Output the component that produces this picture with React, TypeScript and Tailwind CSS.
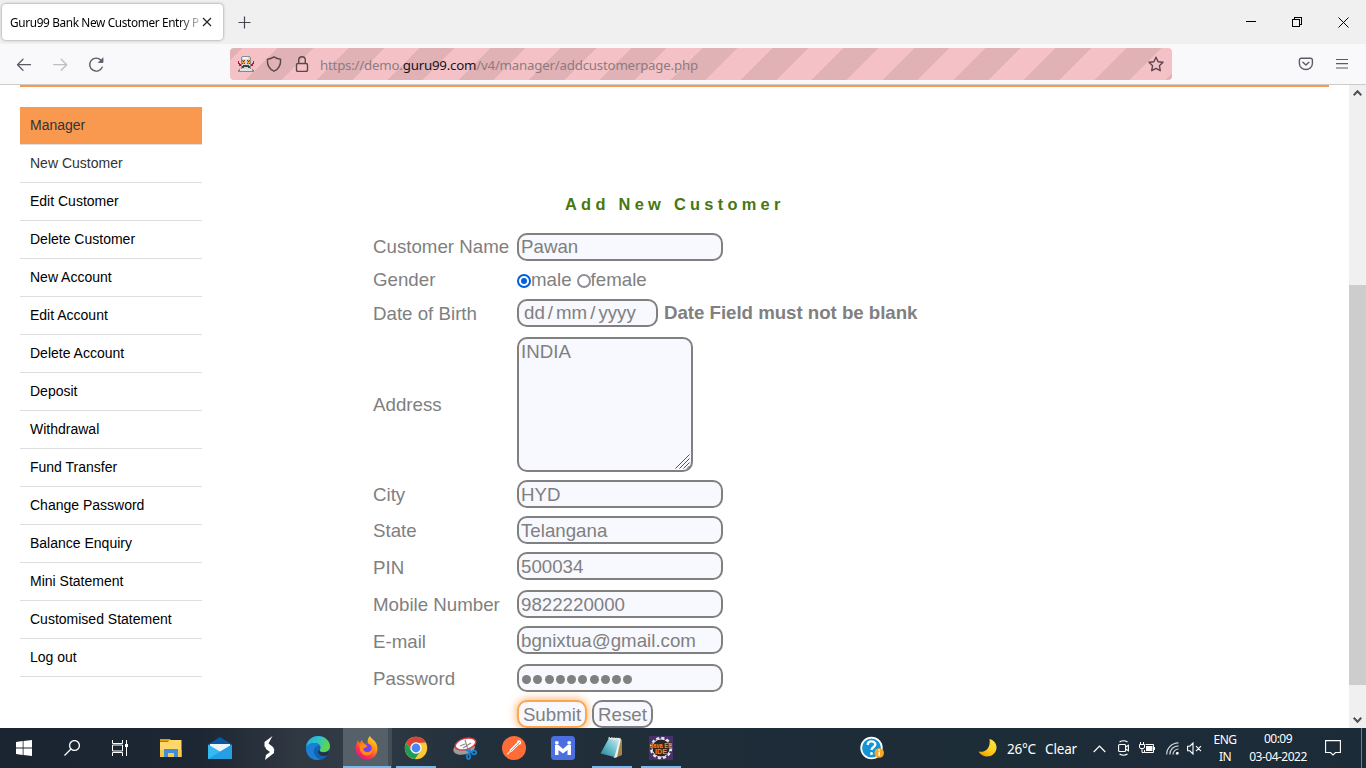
import React from "react";

const menu = [
  "New Customer", "Edit Customer", "Delete Customer", "New Account", "Edit Account", "Delete Account", "Deposit",
  "Withdrawal", "Fund Transfer", "Change Password", "Balance Enquiry", "Mini Statement", "Customised Statement", "Log out",
];

function TabBar() {
  return (
    <div className="flex h-11 shrink-0 items-start bg-[#f0f0f0]">
      <div className="ml-0.5 mt-1 flex h-9 w-[221px] items-center rounded bg-white pl-2 shadow-[0_0_3px_rgba(0,0,0,0.45)]">
        <div className="w-[190px] whitespace-nowrap bg-[linear-gradient(90deg,#000_168px,transparent_196px)] bg-clip-text pt-0.5 text-[11.8px] tracking-[-0.35px] text-transparent">
          Guru99 Bank New Customer Entry P
        </div>
        <svg className="ml-0.5 size-[10px]" viewBox="0 0 10 10" fill="none" stroke="#222" strokeWidth="1.2"><path d="M1 1l8 8M9 1l-8 8" /></svg>
      </div>
      <svg className="ml-[15px] mt-4 size-[13px]" viewBox="0 0 13 13" stroke="#45454f" strokeWidth="1.2"><path d="M6.5 .5v12M.5 6.5h12" /></svg>
      <div className="flex-1" />
      <svg className="mr-[35px] mt-4 h-[11px] w-[11px]" viewBox="0 0 11 11" stroke="#000" shapeRendering="crispEdges"><path d="M0 5.500h10" /></svg>
      <svg className="mr-[35px] mt-[17px] size-[11px]" viewBox="0 0 11 11" fill="none" stroke="#000" shapeRendering="crispEdges"><path d="M.5 2.500h7v7h-7zM2.500 2.500v-2h7v7h-2" /></svg>
      <svg className="mr-[17px] mt-[17px] size-[11px]" viewBox="0 0 11 11" stroke="#000"><path d="M.5 .5l10 10M10.500 .5l-10 10" /></svg>
    </div>
  );
}

function Robot() {
  return (
    <svg className="h-4 w-[18px]" viewBox="0 0 18 16" shapeRendering="crispEdges">
      <path fill="#8d8d8d" d="M5 0h8v1h1v12H4V1h1z" />
      <path fill="#d5d8da" d="M5 1h8v12H5z" />
      <path fill="#f4f6f7" d="M6 1h5v2H6z" />
      <path fill="#5a5a5a" d="M5 4h3v4H5zM10 4h3v4h-3z" />
      <path fill="#f39a30" d="M5 5h3v2H5zM6 4h1v4H6zM10 5h3v2h-3zM11 4h1v4h-1z" />
      <path fill="#7a2c10" d="M6 5h1v1H6zM11 5h1v1h-1z" />
      <path fill="#444" d="M6 9h6v1h1v2h-2v-1H7v1H5v-2h1z" />
      <path fill="#c0142c" d="M1 5h1v3H1zM2 7h1v3H2zM3 8h1v2H3zM16 5h1v3h-1zM15 7h1v3h-1zM14 8h1v2h-1z" />
      <path fill="#888" d="M2 13h14v1h1v2H1v-2h1z" />
      <path fill="#dfe2e3" d="M3 13h12v2H3z" />
    </svg>
  );
}

function NavBar() {
  return (
    <div className="flex h-[41px] shrink-0 items-start border-b border-[#ccc] bg-[#f9f9fb]">
      <svg className="ml-4 mt-3 h-4 w-4" viewBox="0 0 16 16" fill="none" stroke="#5b5b66" strokeWidth="1.3" strokeLinecap="round" strokeLinejoin="round"><path d="M14.500 8.700H1.500M7 3.200L1.500 8.700l5.500 5.500" /></svg>
      <svg className="ml-[21px] mt-3 h-4 w-4" viewBox="0 0 16 16" fill="none" stroke="#bdbdc2" strokeWidth="1.3" strokeLinecap="round" strokeLinejoin="round"><path d="M.7 8.700h13M8.200 3.200l5.500 5.500-5.500 5.500" /></svg>
      <svg className="ml-[19px] mt-3 h-[17px] w-[17px]" viewBox="0 0 17 17" fill="none" stroke="#5b5b66" strokeWidth="1.4" strokeLinecap="round"><path d="M14.200 11.200A6.500 6.500 0 1 1 12.800 4" /><path d="M15 2.200v4.300h-4.300z" fill="#5b5b66" strokeWidth=".8" /></svg>
      <div className="ml-[125px] mt-1 flex h-8 w-[942px] items-center rounded bg-[repeating-linear-gradient(135deg,#e0b2b6_0,#e0b2b6_8.9px,#f4c2c6_8.9px,#f4c2c6_33.9px,#e0b2b6_33.9px,#e0b2b6_50px)] pl-[7px]">
        <Robot />
        <svg className="ml-[11px] h-4 w-4" viewBox="0 0 16 16" fill="none" stroke="#5a474e" strokeWidth="1.4" strokeLinejoin="round"><path d="M8 .9c2.100 1.500 4.200 2.200 6.600 2.300.3 5.500-1.500 9.800-6.600 12C2.900 13 1.100 8.700 1.400 3.200 3.800 3.100 5.900 2.400 8 .9z" /></svg>
        <svg className="ml-3 h-4 w-4" viewBox="0 0 16 16" fill="none" stroke="#5a474e" strokeWidth="1.4"><rect x="2.500" y="7.500" width="11" height="8" rx="1.500" /><path d="M4.700 7.500V4a3.300 3.300 0 0 1 6.600 0v3.500" /></svg>
        <div className="ml-[10px] mt-1 w-[828px] whitespace-nowrap text-[13.3px] tracking-[-0.22px] text-[#8f7a80]">
          https://demo.<span className="text-[#15141a]">guru99.com</span>/v4/manager/addcustomerpage.php
        </div>
        <svg className="h-4 w-4" viewBox="0 0 16 16" fill="none" stroke="#5a474e" strokeWidth="1.4" strokeLinejoin="round"><path d="M8 1.200l2.100 4.500 4.900.6-3.600 3.400.9 5-4.300-2.400-4.300 2.400.9-5L1 6.300l4.900-.6z" /></svg>
      </div>
      <svg className="ml-[126px] mt-[13px] h-[15px] w-4" viewBox="0 0 16 15" fill="none" stroke="#5b5b66" strokeWidth="1.4" strokeLinecap="round" strokeLinejoin="round"><path d="M3.400 1.200h9c1.200 0 2 .8 2 2v3.300a6.500 6 0 0 1-13 0V3.200c0-1.200.8-2 2-2zM4.900 5.200l3 2.900 3-2.900" /></svg>
      <svg className="ml-[22px] mt-3.5 h-[13px] w-[13px]" viewBox="0 0 13 13" stroke="#5b5b66" strokeWidth="1.2"><path d="M0 1.500h12M0 5.700h12M0 10h12" /></svg>
    </div>
  );
}

function Row({ label, gap, h = "h-7", nudge = "", children }: { label: string; gap: string; h?: string; nudge?: string; children: React.ReactNode }) {
  return (
    <div className={`flex items-center ${h} ${gap}`}>
      <div className={`w-36 leading-[22px] ${nudge}`}>{label}</div>
      {children}
    </div>
  );
}

function Field({ first, children }: { first?: boolean; children: React.ReactNode }) {
  return <div className={`flex h-7 w-[206px] items-center rounded-[10px] border-2 border-[#808080] bg-[#f8f8ff] pl-0.5 leading-[22px] ${first ? "" : "pt-0.5"}`}>{children}</div>;
}

function Page() {
  return (
    <div className="flex h-[643px] shrink-0 overflow-hidden bg-white font-['Liberation_Sans',Arial,sans-serif]">
      <div className="ml-5 w-[1309px]">
        <div className="h-0.5 bg-[#f8984f]" />
        <div className="flex">
          <div className="mt-5 w-[182px] text-[14px] leading-[37px]">
            <div className="h-[38px] border-b border-[#dedede] bg-[#f8994f] bg-clip-padding pl-2.5 text-[#333]">Manager</div>
            {menu.map((m, i) => (
              <div key={m} className={`h-[38px] border-b border-[#dedede] pl-2.5 ${i === 0 ? "text-[#333]" : "text-black"}`}>{m}</div>
            ))}
          </div>
          <div className="ml-[171px] mt-[106px] w-[600px] whitespace-nowrap text-[18.72px] text-[#808080]">
            <div className="ml-48 h-[23px] text-[16.4px] font-bold leading-[22px] tracking-[4.28px] text-[#47780f]">Add New Customer</div>
            <Row label="Customer Name" gap="mt-[17px]"><Field first>Pawan</Field></Row>
            <Row label="Gender" gap="mt-[5px]">
              <span className="mt-0.5 flex size-3.5 items-center justify-center rounded-full border-2 border-[#0060df] bg-white"><span className="size-1.5 rounded-full bg-[#0060df]" /></span>
              <span>male</span>
              <span className="ml-[5px] mt-0.5 size-3.5 rounded-full border-2 border-[#8f8f9d] bg-white" />
              <span>female</span>
            </Row>
            <Row label="Date of Birth" gap="mt-[5px]" nudge="pt-0.5">
              <div className="flex h-7 w-[141px] items-center rounded-[10px] border-2 border-[#808080] bg-[#f8f8ff] pl-[5px]">
                <span>dd</span><span className="mx-[3px]">/</span><span>mm</span><span className="mx-[3px]">/</span><span>yyyy</span>
              </div>
              <span className="ml-1.5 font-bold tracking-[-0.04px]">Date Field must not be blank</span>
            </Row>
            <Row label="Address" gap="mt-[10px]" h="h-[135px]">
              <div className="flex h-[135px] w-44 flex-col justify-between rounded-[10px] border-2 border-[#808080] bg-[#f8f8ff] pl-0.5">
                <div className="leading-[25px]">INDIA</div>
                <svg className="mb-px mr-px size-[15px] self-end" viewBox="0 0 15 15" stroke="#555" strokeWidth="1"><path d="M.5 14.500l14-14M4.500 14.500l10-10M8.500 14.500l6-6M12 14.500l2.500-2.500" /></svg>
              </div>
            </Row>
            <Row label="City" gap="mt-2" nudge="pt-0.5"><Field>HYD</Field></Row>
            <Row label="State" gap="mt-2" nudge="pt-0.5"><Field>Telangana</Field></Row>
            <Row label="PIN" gap="mt-2" nudge="pt-1"><Field>500034</Field></Row>
            <Row label="Mobile Number" gap="mt-2.5" nudge="pt-0.5"><Field>9822220000</Field></Row>
            <Row label="E-mail" gap="mt-2" nudge="pt-1"><Field>bgnixtua@gmail.com</Field></Row>
            <Row label="Password" gap="mt-2.5" nudge="pt-0.5">
              <Field>
                <span className="ml-px flex gap-[2.25px]">
                  {Array.from({ length: 10 }, (_, i) => <span key={i} className="size-[9px] rounded-full bg-[#808080]" />)}
                </span>
              </Field>
            </Row>
            <Row label="" gap="mt-2">
              <div className="flex h-7 w-[70px] items-center justify-center rounded-[10px] border-2 border-[#ffa54f] bg-[#f8f8ff] pt-0.5 leading-[22px] shadow-[0_0_10px_#ffa54f]">Submit</div>
              <div className="ml-[5px] flex h-7 w-[61px] items-center justify-center rounded-[10px] border-2 border-[#808080] bg-[#f8f8ff] pt-0.5 leading-[22px]">Reset</div>
            </Row>
          </div>
        </div>
      </div>
      <div className="ml-5 flex w-[17px] flex-col items-center bg-[#f0f0f0]">
        <svg className="mt-1 h-2 w-[9px]" viewBox="0 0 9 8" fill="none" stroke="#505050" strokeWidth="2"><path d="M.7 6.200l3.800-4 3.800 4" /></svg>
        <div className="mt-[188px] h-[400px] w-full bg-[#cdcdcd]" />
        <svg className="mt-[31px] h-2 w-[9px]" viewBox="0 0 9 8" fill="none" stroke="#505050" strokeWidth="2"><path d="M.7 1.800l3.800 4 3.800-4" /></svg>
      </div>
    </div>
  );
}

const taskIcons: { name: string; art: React.ReactNode; line?: string; tile?: string }[] = [
  { name: "explorer", art: <><path fill="#e0a000" d="M1 3h10l1.500 2H1z" /><path fill="#ffd76a" d="M1 5.500h8l1.500-1.500h12V21H1z" /><path fill="#f7c84b" d="M1 14h21.500v7H1z" /><path fill="#3f8fd8" d="M5 13h14v8h-4v-4H9v4H5z" /></> },
  { name: "mail", art: <><path fill="#0a58a5" d="M0 8.500L12 1l12 7.500-2 3H2z" /><path fill="#eef4f8" d="M2 8h20v6l-10 5-10-5z" /><path fill="#35b9f1" d="M0 8.500l12 7L24 8.500V23H0z" /><path fill="#1c91df" d="M24 8.500V23H0z" opacity=".65" /></> },
  { name: "slash", art: <><path fill="#fff" d="M15.500 0L7.500 6v4.500l8 5.500 2-2-1.500-3-4.500-3.500z" /><path fill="#fff" d="M8 24l9-7V13.500L8 8.500l1 4.500 4 3-4 3z" /></> },
  { name: "edge", art: <><defs><linearGradient id="eg" x1="0" y1="0" x2="1" y2=".4"><stop stopColor="#24a9e5" /><stop offset=".55" stopColor="#2fc5c4" /><stop offset="1" stopColor="#62d54a" /></linearGradient></defs><circle cx="12" cy="12" r="12" fill="#1162b5" /><path fill="url(#eg)" d="M0 11C1 4 6 0 12 0c7 0 12 5 12 10 0 4-3 6-7 6-3 0-4-1-3-2.500 2-3-1-6.500-5-6.500C5 7 2 9 0 11z" /><path fill="#1b7fd4" d="M0 12c1-3 4-5 8-5 3 0 5 1.500 5.500 3C9 10 7 13 8 17c1 3 3 5 6 6.500C6 25.500 0 20 0 12z" /><path fill="#28313c" d="M14 13.500c-1.500 2 1 3 3.500 3 3 0 5-1 6.200-2.500L22 19c-4 2.500-9.500.5-9.800-3-.1-1 .8-2 1.800-2.500z" /></> },
  { name: "firefox", tile: "bg-[#566069] border-r-4 border-[#434d56]", line: "left-0 w-[48px]", art: <><defs><linearGradient id="ff" x1="1" y1="0" x2=".3" y2="1"><stop stopColor="#fff14d" /><stop offset=".4" stopColor="#ff980e" /><stop offset=".75" stopColor="#ff3647" /><stop offset="1" stopColor="#e31587" /></linearGradient></defs><path fill="url(#ff)" d="M15 0c1 3 5 4 6.500 8 3 7-1 15.500-9.500 15.500C5 23.500 0 18 .7 11.500 1 8 2 7 2.500 4.500L5 7l1.500-3L9 7.500l4 .5c-1-3 0-6 2-8z" /><circle cx="11.500" cy="12.500" r="5.300" fill="#7542e5" /><path fill="#ff8a16" d="M4.500 8c3-1.500 6 0 8 2-1 2-3 1.500-4 2.500-.5 2 1.500 3.500 4 3.500 2.500 0 4-1.500 4.500-4 1 5-2 7.500-5.500 7.500C7 19.500 3.500 14 4.500 8z" /></> },
  { name: "chrome", line: "left-1 w-10", art: <><circle cx="12" cy="12" r="11.200" fill="#fcc934" /><path fill="#da4437" d="M2.300 6.400a11.200 11.200 0 0 1 19.400 0L12 7l-4.500 7.500z" /><path fill="#1f9d58" d="M2.300 6.400l5.200 8.600 8.500.5-5 7.600A11.200 11.200 0 0 1 2.300 6.400z" /><circle cx="12" cy="12" r="5.700" fill="#fff" /><circle cx="12" cy="12" r="4.400" fill="#4688f1" /></> },
  { name: "snip", art: <><ellipse cx="11" cy="12.500" rx="11" ry="6" fill="#9c9c9c" transform="rotate(-12 11 12)" /><ellipse cx="12.500" cy="8" rx="10.500" ry="5.500" fill="#fff" stroke="#df3a40" strokeWidth="1.400" transform="rotate(-15 12.500 8)" /><path d="M12 4l3 10M18 7l-8 5M7 10l5-2" stroke="#888" strokeWidth="1.100" fill="none" /><g fill="none" stroke="#1686d9" strokeWidth="1.700"><path d="M12.500 13.500l6 3M17 13l-1 5" /><ellipse cx="15.500" cy="20.500" rx="1.600" ry="2.500" /><ellipse cx="21" cy="16.500" rx="2.200" ry="1.900" /></g></> },
  { name: "postman", art: <><circle cx="12" cy="12" r="12" fill="#ff6c37" /><path d="M5 18.500l7-7" stroke="#ffd9ca" strokeWidth="1.300" /><path d="M8.500 15l7-7" stroke="#fff" strokeWidth="2.800" /><circle cx="17" cy="6.500" r="2.200" fill="#fff" /><path d="M9 15l9-9" stroke="#ff6c37" strokeWidth=".8" /></> },
  { name: "mobile", art: <><rect width="24" height="24" rx="3.500" fill="#4b6fe0" /><path fill="#fff" d="M4 9h3.500l4.500 4 4.500-4H20v10h-3.500v-5L12 17.500 7.500 14v5H4z" /><circle cx="5.800" cy="6.800" r="1.900" fill="#fff" /><circle cx="18.200" cy="6.800" r="1.900" fill="#fff" /></> },
  { name: "notepad", line: "left-1 w-10", art: <><defs><linearGradient id="np" x1="0" y1="1" x2="1" y2="0"><stop stopColor="#237d93" /><stop offset=".5" stopColor="#67bbca" /><stop offset="1" stopColor="#cceef1" /></linearGradient></defs><path fill="#a88348" d="M20 3l2 1v15l-7 3z" /><path fill="#f0f0ec" d="M9 2h11l1 1-4 18-3 1z" /><path fill="url(#np)" d="M8.500 3L19 4l-4.500 17L.5 17.500z" /><path d="M8.500 2L20 3" stroke="#ddd" strokeWidth="2" strokeDasharray="1.500 1" /></> },
  { name: "eclipse", line: "left-1 w-10", art: <><rect width="24" height="24" fill="#46316b" /><circle cx="12" cy="12" r="9.700" fill="none" stroke="#e8e8e8" strokeWidth="3" strokeDasharray="3 2.080" /><circle cx="12" cy="12" r="9" fill="#29252e" stroke="#ddd" strokeWidth="1" /><g fill="#ff8a1e" stroke="#4a1c00" strokeWidth=".8" paintOrder="stroke" fontFamily="Liberation Sans" fontWeight="bold"><text x="1" y="11.500" fontSize="7" textLength="22" lengthAdjust="spacingAndGlyphs">Java EE</text><text x="6" y="18" fontSize="7" textLength="12" lengthAdjust="spacingAndGlyphs">IDE</text></g></> },
];

function Taskbar() {
  return (
    <div className="flex h-10 shrink-0 bg-[linear-gradient(90deg,#1a2531_0,#1c2733_200px,#303842_300px,#303b45_350px,#22303b_480px,#1e2d38_700px,#1b2b37_1366px)] text-[13px] text-white">
      <div className="flex w-[147px] items-center">
        <svg className="ml-4 h-4 w-4" viewBox="0 0 16 16" fill="#fff"><path d="M0 2l6.700-1v6.600H0zM7.500.9L16 0v7.600H7.500zM0 8.400h6.700V15L0 14zM7.500 8.400H16V16l-8.500-1z" /></svg>
        <svg className="ml-8 h-4 w-4" viewBox="0 0 16 16" fill="none" stroke="#fff" strokeWidth="1.300"><circle cx="10.500" cy="5.500" r="4.900" /><path d="M7 9L.5 15.500" /></svg>
        <svg className="ml-8 h-4 w-[17px]" viewBox="0 0 17 16" fill="none" stroke="#fff"><path d="M.5 0v3.500h10V0M.5 16v-3.500h10V16M.5 5h10v6H.5zM14.500 0v16" /><path fill="#fff" stroke="none" d="M13 4h3v3h-3z" /></svg>
      </div>
      {taskIcons.map((t) => (
        <div key={t.name} className={`relative flex w-[49px] shrink-0 items-center pl-3 ${t.tile ?? ""}`}>
          <svg className="h-6 w-6 shrink-0" viewBox="0 0 24 24">{t.art}</svg>
          {t.line && <div className={`absolute bottom-0 h-0.5 bg-[#76b9ed] ${t.line}`} />}
        </div>
      ))}
      <div className="flex flex-1 items-center">
        <svg className="ml-[174px] h-6 w-6" viewBox="0 0 24 24"><circle cx="11.500" cy="12" r="10.300" fill="#1493d5" stroke="#fff" strokeWidth="1.800" /><path d="M7.800 9c0-5 7.500-4.500 7.500-.5 0 2.500-3.700 2.500-3.700 5.500" fill="none" stroke="#fff" strokeWidth="2.400" /><circle cx="11.500" cy="17.500" r="1.500" fill="#fff" /><circle cx="19.200" cy="17" r="4.800" fill="#f6a723" /><path d="M19.200 15.800v4M19.200 13.300v1.400" stroke="#fff" strokeWidth="1.500" /></svg>
        <svg className="ml-[94px] h-[18px] w-[19px]" viewBox="0 0 19 18"><defs><linearGradient id="mn" x1="1" y1="0" x2=".3" y2="1"><stop stopColor="#ffe64a" /><stop offset=".6" stopColor="#ffcf20" /><stop offset="1" stopColor="#f0a000" /></linearGradient></defs><path fill="url(#mn)" d="M11.500 0c7 2 9 9 5 14S4.500 19 .5 12.500C6 14 13 10 11.500 0z" /></svg>
        <span className="ml-[10px] mt-0.5 w-[38px] whitespace-nowrap text-[13.500px] tracking-[-0.2px]">26°C</span>
        <span className="mt-0.5 w-[48px] text-[13.500px] tracking-[-0.15px]">Clear</span>
        <svg className="mt-px h-2 w-[13px]" viewBox="0 0 13 8" fill="none" stroke="#fff" strokeWidth="1.200"><path d="M.7 7L6.500 1l5.800 6" /></svg>
        <svg className="ml-3 h-4 w-[11px]" viewBox="0 0 11 16" fill="none" stroke="#fff" strokeWidth="1.100"><rect x=".6" y="4.500" width="7" height="7" rx="1" /><path d="M7.600 7l2.800-1.800v5.600L7.600 9M1.500 2Q5.500-.5 9.500 2M1.500 14q4 2.500 8 0" /></svg>
        <svg className="ml-[10px] h-3 w-4" viewBox="0 0 16 12" fill="none" stroke="#fff"><path d="M6.500 2.500h8v8h-9V8M15.500 5v3M1.500 0v2.500M4.500 0v2.500M.5 2.500h5V5a1.500 1.500 0 0 1-1.500 1.500H2A1.500 1.500 0 0 1 .5 5zM3 6.500v4h2.500" /><path fill="#fff" stroke="none" d="M7 4h6.500v5H7z" /></svg>
        <svg className="ml-[11px] h-[13px] w-[13px]" viewBox="0 0 13 13" fill="none" stroke="#ccd2d6" strokeWidth="1.200"><path d="M.7 12.500C.7 6 6 .8 12.500.8M3.800 12.500c0-5 4-8.700 8.700-8.700M7 12.500c0-3 2.500-5.500 5.500-5.500" /><path d="M9.800 12.500v-1c0-.8.700-1.500 1.500-1.500h1.200v2.500z" fill="#fff" stroke="none" /></svg>
        <svg className="ml-2 h-[13px] w-[15px]" viewBox="0 0 15 13" fill="none" stroke="#fff" strokeWidth="1.100"><path d="M.6 4.200h2.200L6 1v11L2.800 8.800H.6zM9 4.200l5 5M14 4.200l-5 5" /></svg>
        <div className="ml-[10px] w-[26px] text-center text-[12px] leading-[17px] tracking-[-0.5px]">ENG<br />IN</div>
        <div className="ml-[10px] w-[60px] whitespace-nowrap text-center text-[12px] leading-[18px] tracking-[-0.5px]">00:09<br />03-04-2022</div>
        <svg className="ml-[17px] h-4 w-4" viewBox="0 0 16 16" fill="none" stroke="#fff" strokeWidth="1.100"><path d="M.6.6h14.800v11.900H10.500L8 15l-2.500-2.500H.6z" /></svg>
        <div className="ml-5 h-10 w-px bg-[#737d85]" />
      </div>
    </div>
  );
}

export default function App() {
  return (
    <div className="flex h-[768px] w-[1366px] flex-col overflow-hidden font-['Noto_Sans','Open_Sans',sans-serif]">
      <TabBar />
      <NavBar />
      <Page />
      <Taskbar />
    </div>
  );
}
